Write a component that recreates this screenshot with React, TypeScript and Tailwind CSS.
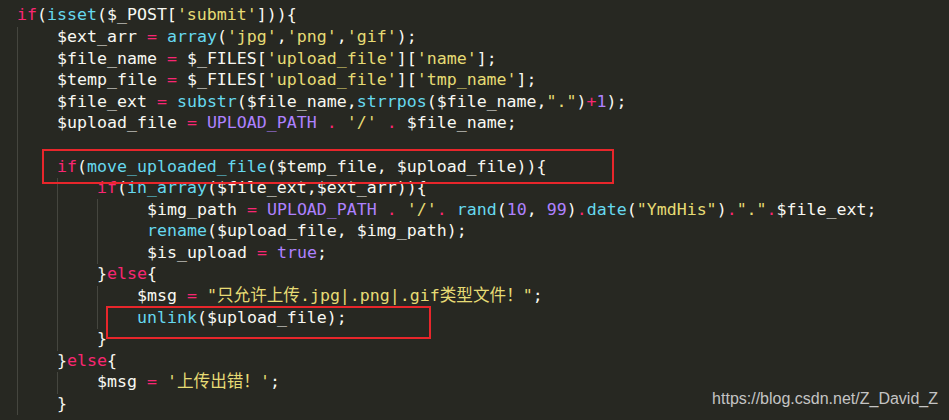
import React from 'react';

type Tok = [string, string];

// monokai palette
const K = 'text-[#f92672]';
const F = 'text-[#66d9ef]';
const S = 'text-[#e6db74]';
const C = 'text-[#ae81ff]';
const W = 'text-[#f8f8f2]';

const lines: { indent: number; toks: Tok[] }[] = [
  { indent: 0, toks: [[K, 'if'], [W, '('], [F, 'isset'], [W, '($_POST['], [S, "'submit'"], [W, '])){']] },
  { indent: 4, toks: [[W, '$ext_arr '], [K, '='], [W, ' '], [F, 'array'], [W, '('], [S, "'jpg'"], [W, ','], [S, "'png'"], [W, ','], [S, "'gif'"], [W, ');']] },
  { indent: 4, toks: [[W, '$file_name '], [K, '='], [W, ' $_FILES['], [S, "'upload_file'"], [W, ']['], [S, "'name'"], [W, '];']] },
  { indent: 4, toks: [[W, '$temp_file '], [K, '='], [W, ' $_FILES['], [S, "'upload_file'"], [W, ']['], [S, "'tmp_name'"], [W, '];']] },
  { indent: 4, toks: [[W, '$file_ext '], [K, '='], [W, ' '], [F, 'substr'], [W, '($file_name,'], [F, 'strrpos'], [W, '($file_name,'], [S, '"."'], [W, ')'], [K, '+'], [C, '1'], [W, ');']] },
  { indent: 4, toks: [[W, '$upload_file '], [K, '='], [W, ' '], [C, 'UPLOAD_PATH'], [W, ' '], [K, '.'], [W, ' '], [S, "'/'"], [W, ' '], [K, '.'], [W, ' $file_name;']] },
  { indent: 4, toks: [] },
  { indent: 4, toks: [[K, 'if'], [W, '('], [F, 'move_uploaded_file'], [W, '($temp_file, $upload_file)){']] },
  { indent: 8, toks: [[K, 'if'], [W, '('], [F, 'in_array'], [W, '($file_ext,$ext_arr)){']] },
  {
    indent: 13,
    toks: [[W, '$img_path '], [K, '='], [W, ' '], [C, 'UPLOAD_PATH'], [W, ' '], [K, '.'], [W, ' '], [S, "'/'"], [K, '.'], [W, ' '], [F, 'rand'], [W, '('], [C, '10'], [W, ', '], [C, '99'], [W, ')'], [K, '.'], [F, 'date'], [W, '('], [S, '"YmdHis"'], [W, ')'], [K, '.'], [S, '"."'], [K, '.'], [W, '$file_ext;']],
  },
  { indent: 13, toks: [[F, 'rename'], [W, '($upload_file, $img_path);']] },
  { indent: 13, toks: [[W, '$is_upload '], [K, '='], [W, ' '], [C, 'true'], [W, ';']] },
  { indent: 8, toks: [[W, '}'], [K, 'else'], [W, '{']] },
  { indent: 12, toks: [[W, '$msg '], [K, '='], [W, ' '], [S, '"只允许上传.jpg|.png|.gif类型文件！"'], [W, ';']] },
  { indent: 12, toks: [[F, 'unlink'], [W, '($upload_file);']] },
  { indent: 8, toks: [[W, '}']] },
  { indent: 4, toks: [[W, '}'], [K, 'else'], [W, '{']] },
  { indent: 8, toks: [[W, '$msg '], [K, '='], [W, ' '], [S, "'上传出错！'"], [W, ';']] },
  { indent: 4, toks: [[W, '}']] },
];

const Indent = ({ n }: { n: number }) => {
  const guides: number[] = [];
  for (let c = 0; c < n && c <= 8; c += 4) guides.push(c);
  return (
    <>
      {guides.map((c, i) => {
        const isLast = i === guides.length - 1;
        const span = isLast ? n - c : 4;
        return (
          <span
            key={c}
            className="shrink-0 self-stretch border-l border-[#45463f]"
            style={{ width: span * 10 }}
          />
        );
      })}
    </>
  );
};

export default function App() {
  return (
    <div className="relative w-[949px] h-[420px] overflow-hidden bg-[#272822]">
      <div className="pt-[5px] pl-[17px] font-['DejaVu_Sans_Mono','Noto_Sans_CJK_SC',monospace] text-[16.6px]">
        {lines.map((ln, i) => (
          <div key={i} className="flex h-[21.6px] items-center whitespace-pre">
            <Indent n={ln.indent} />
            {ln.toks.map(([cls, t], j) => (
              <span key={j} className={cls}>
                {t}
              </span>
            ))}
          </div>
        ))}
      </div>

      {/* annotation boxes */}
      <div className="absolute left-[42px] top-[149px] w-[572px] h-[35px] border-2 border-[#e8262b]" />
      <div className="absolute left-[106px] top-[306px] w-[325px] h-[33px] border-2 border-[#e8262b]" />

      {/* watermark */}
      <div className="absolute right-[11px] bottom-[9px] font-['Liberation_Sans',Arial,sans-serif] text-[16px] text-[#c4c4c4]">
        https://blog.csdn.net/Z_David_Z
      </div>
    </div>
  );
}
